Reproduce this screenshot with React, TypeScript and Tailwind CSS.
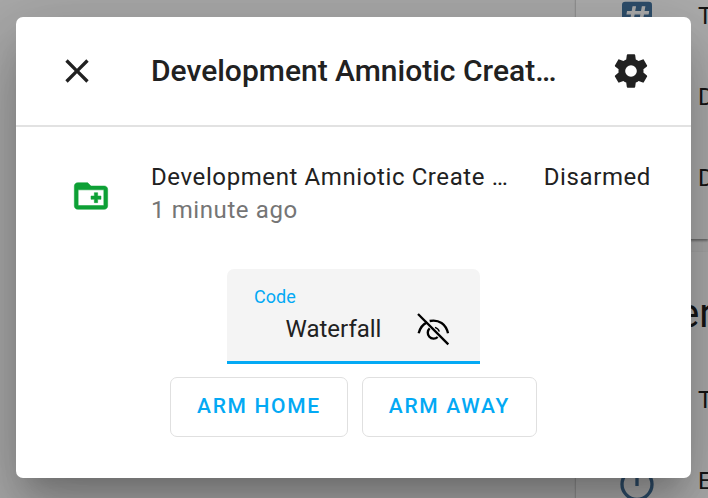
import type { ReactNode } from "react";

const COG =
  "M12,15.5A3.5,3.5 0 0,1 8.5,12A3.5,3.5 0 0,1 12,8.5A3.5,3.5 0 0,1 15.5,12A3.5,3.5 0 0,1 12,15.5M19.43,12.97C19.47,12.65 19.5,12.33 19.5,12C19.5,11.67 19.47,11.34 19.43,11L21.54,9.37C21.73,9.22 21.78,8.95 21.66,8.73L19.66,5.27C19.54,5.05 19.27,4.96 19.05,5.05L16.56,6.05C16.04,5.66 15.5,5.32 14.87,5.07L14.5,2.42C14.46,2.18 14.25,2 14,2H10C9.75,2 9.54,2.18 9.5,2.42L9.13,5.07C8.5,5.32 7.96,5.66 7.44,6.05L4.95,5.05C4.73,4.96 4.46,5.05 4.34,5.27L2.34,8.73C2.21,8.95 2.27,9.22 2.46,9.37L4.57,11C4.53,11.34 4.5,11.67 4.5,12C4.5,12.33 4.53,12.65 4.57,12.97L2.46,14.63C2.27,14.78 2.21,15.05 2.34,15.27L4.34,18.73C4.46,18.95 4.73,19.03 4.95,18.95L7.44,17.94C7.96,18.34 8.5,18.68 9.13,18.93L9.5,21.58C9.54,21.82 9.75,22 10,22H14C14.25,22 14.46,21.82 14.5,21.58L14.87,18.93C15.5,18.67 16.04,18.34 16.56,17.94L19.05,18.95C19.27,19.03 19.54,18.95 19.66,18.73L21.66,15.27C21.78,15.05 21.73,14.78 21.54,14.63L19.43,12.97Z";
const CLOSE =
  "M19,6.41L17.59,5L12,10.59L6.41,5L5,6.41L10.59,12L5,17.59L6.41,19L12,13.41L17.59,19L19,17.59L13.41,12L19,6.41Z";
const FOLDER_PLUS =
  "M20 6h-8l-2-2H4c-1.1 0-2 .9-2 2v12c0 1.1.9 2 2 2h16c1.1 0 2-.9 2-2V8c0-1.1-.9-2-2-2zm-.3 11.700H4.300V8.300h15.400v9.400zM12 12h2v-2h2v2h2v2h-2v2h-2v-2h-2z";
const POUND =
  "M5.41,21L6.12,17H2.12L2.47,15H6.47L7.53,9H3.53L3.88,7H7.88L8.59,3H10.59L9.88,7H15.88L16.59,3H18.59L17.88,7H21.88L21.53,9H17.53L16.47,15H20.47L20.12,17H16.12L15.41,21H13.41L14.12,17H8.12L7.41,21H5.41M9.53,9L8.47,15H14.47L15.53,9H9.53Z";

function Icon({ children, viewBox = "0 0 24 24" }: { children: ReactNode; viewBox?: string }) {
  return (
    <svg viewBox={viewBox} className="size-10 shrink-0" fill="currentColor" aria-hidden="true">
      {children}
    </svg>
  );
}

function EyeOff() {
  return (
    <Icon viewBox="0 0 120 120">
      <g fill="none" stroke="currentColor" strokeWidth="7">
        <path d="M15 15L106 106" />
        <path d="M17 73C21 56 29 46 42 40" />
        <path d="M50 36C78 30 99 46 105 73" />
        <path d="M50 58A17.500 17.500 0 1 0 74 84" />
        <path d="M66 55A19 19 0 0 1 79 68" strokeWidth="4" />
      </g>
    </Icon>
  );
}

function EntityRow({ icon, name }: { icon?: ReactNode; name: string }) {
  return (
    <li className="flex h-[81px] items-center pl-[41px] text-2xl">
      <span className="mr-[41px] flex size-10 shrink-0 text-[#44739e]">{icon}</span>
      {name}
    </li>
  );
}

function Dashboard() {
  return (
    <main className="absolute inset-0 overflow-hidden bg-[#fafafa] text-[#212121]" aria-hidden="true">
      <div className="-mt-[25px] ml-auto w-[132px]">
        <section className="bg-white pb-[21px] shadow-[0_2px_2px_rgba(0,0,0,0.3),0_1px_3px_rgba(0,0,0,0.12)]">
          <ul>
            <EntityRow
              name="T"
              icon={
                <Icon>
                  <rect x="3" y="3.500" width="18" height="18" rx="2" />
                  <path
                    d={POUND}
                    fill="white"
                    stroke="white"
                    strokeWidth="1"
                    transform="translate(3.6 4.4) scale(0.7)"
                  />
                </Icon>
              }
            />
            <EntityRow name="D" />
            <EntityRow name="D" />
          </ul>
        </section>
        <section className="mt-[13px] bg-white shadow-[0_2px_2px_rgba(0,0,0,0.3),0_1px_3px_rgba(0,0,0,0.12)]">
          <h2 className="h-[107px] pt-[38px] pl-[102px] text-[40px] leading-[48px]">er</h2>
          <ul>
            <EntityRow name="T" />
            <EntityRow
              name="E"
              icon={
                <Icon>
                  <g fill="none" stroke="currentColor" strokeWidth="2">
                    <circle cx="12" cy="14" r="9" />
                    <path d="M12 8v7" />
                  </g>
                </Icon>
              }
            />
          </ul>
        </section>
      </div>
    </main>
  );
}

function ArmButton({ children }: { children: ReactNode }) {
  return (
    <button
      type="button"
      className="h-[60px] rounded-[7px] border border-[#e0e0e0] px-[26px] text-[21px] font-medium tracking-[0.08em] text-[#03a9f4] uppercase"
    >
      {children}
    </button>
  );
}

export default function App() {
  return (
    <div className="relative h-screen overflow-hidden font-['Roboto',sans-serif]">
      <Dashboard />
      <div className="absolute inset-0 bg-black/32 py-[17px] pr-[17px] pl-4">
        <div
          role="dialog"
          aria-labelledby="dialog-title"
          className="rounded-[7px] bg-white text-[#212121] shadow-[0_19px_26px_-12px_rgba(0,0,0,0.2),0_41px_65px_5px_rgba(0,0,0,0.14),0_15px_78px_14px_rgba(0,0,0,0.12)]"
        >
          <header className="flex h-[110px] items-center border-b-2 border-[#e2e2e2] pr-10 pl-[41px]">
            <button type="button" aria-label="Close">
              <Icon>
                <path d={CLOSE} />
              </Icon>
            </button>
            <h1 id="dialog-title" className="ml-[54px] flex-1 text-3xl font-medium whitespace-nowrap">
              Development Amniotic Creat…
            </h1>
            <button type="button" aria-label="Settings">
              <Icon>
                <path d={COG} />
              </Icon>
            </button>
          </header>
          <div className="pt-[34px] pb-[41px]">
            <div className="flex pr-10 pl-[41px] text-2xl leading-[33px] tracking-wide whitespace-nowrap">
              <div className="mr-[27px] flex w-[67px] items-center justify-center pt-1 text-[#0da035]">
                <Icon>
                  <path d={FOLDER_PLUS} fillRule="evenodd" stroke="currentColor" strokeWidth="0.3" />
                </Icon>
              </div>
              <div className="flex-1">
                <p>Development Amniotic Create …</p>
                <p className="text-[#757575]">1 minute ago</p>
              </div>
              <p>Disarmed</p>
            </div>
            <div className="mx-auto mt-[42px] h-[95px] w-[253px] rounded-t-[7px] border-b-3 border-[#03a9f4] bg-[#f4f4f4] pt-4 pl-[27px]">
              <label htmlFor="code" className="block text-lg leading-6 text-[#03a9f4]">
                Code
              </label>
              <div className="flex items-center">
                <input
                  id="code"
                  type="text"
                  defaultValue="Waterfall"
                  className="h-10 w-[159px] text-center text-2xl outline-none"
                />
                <button type="button" aria-label="Show code" className="text-black">
                  <EyeOff />
                </button>
              </div>
            </div>
            <div className="mt-[13px] flex justify-center gap-3.5">
              <ArmButton>Arm home</ArmButton>
              <ArmButton>Arm away</ArmButton>
            </div>
          </div>
        </div>
      </div>
    </div>
  );
}
